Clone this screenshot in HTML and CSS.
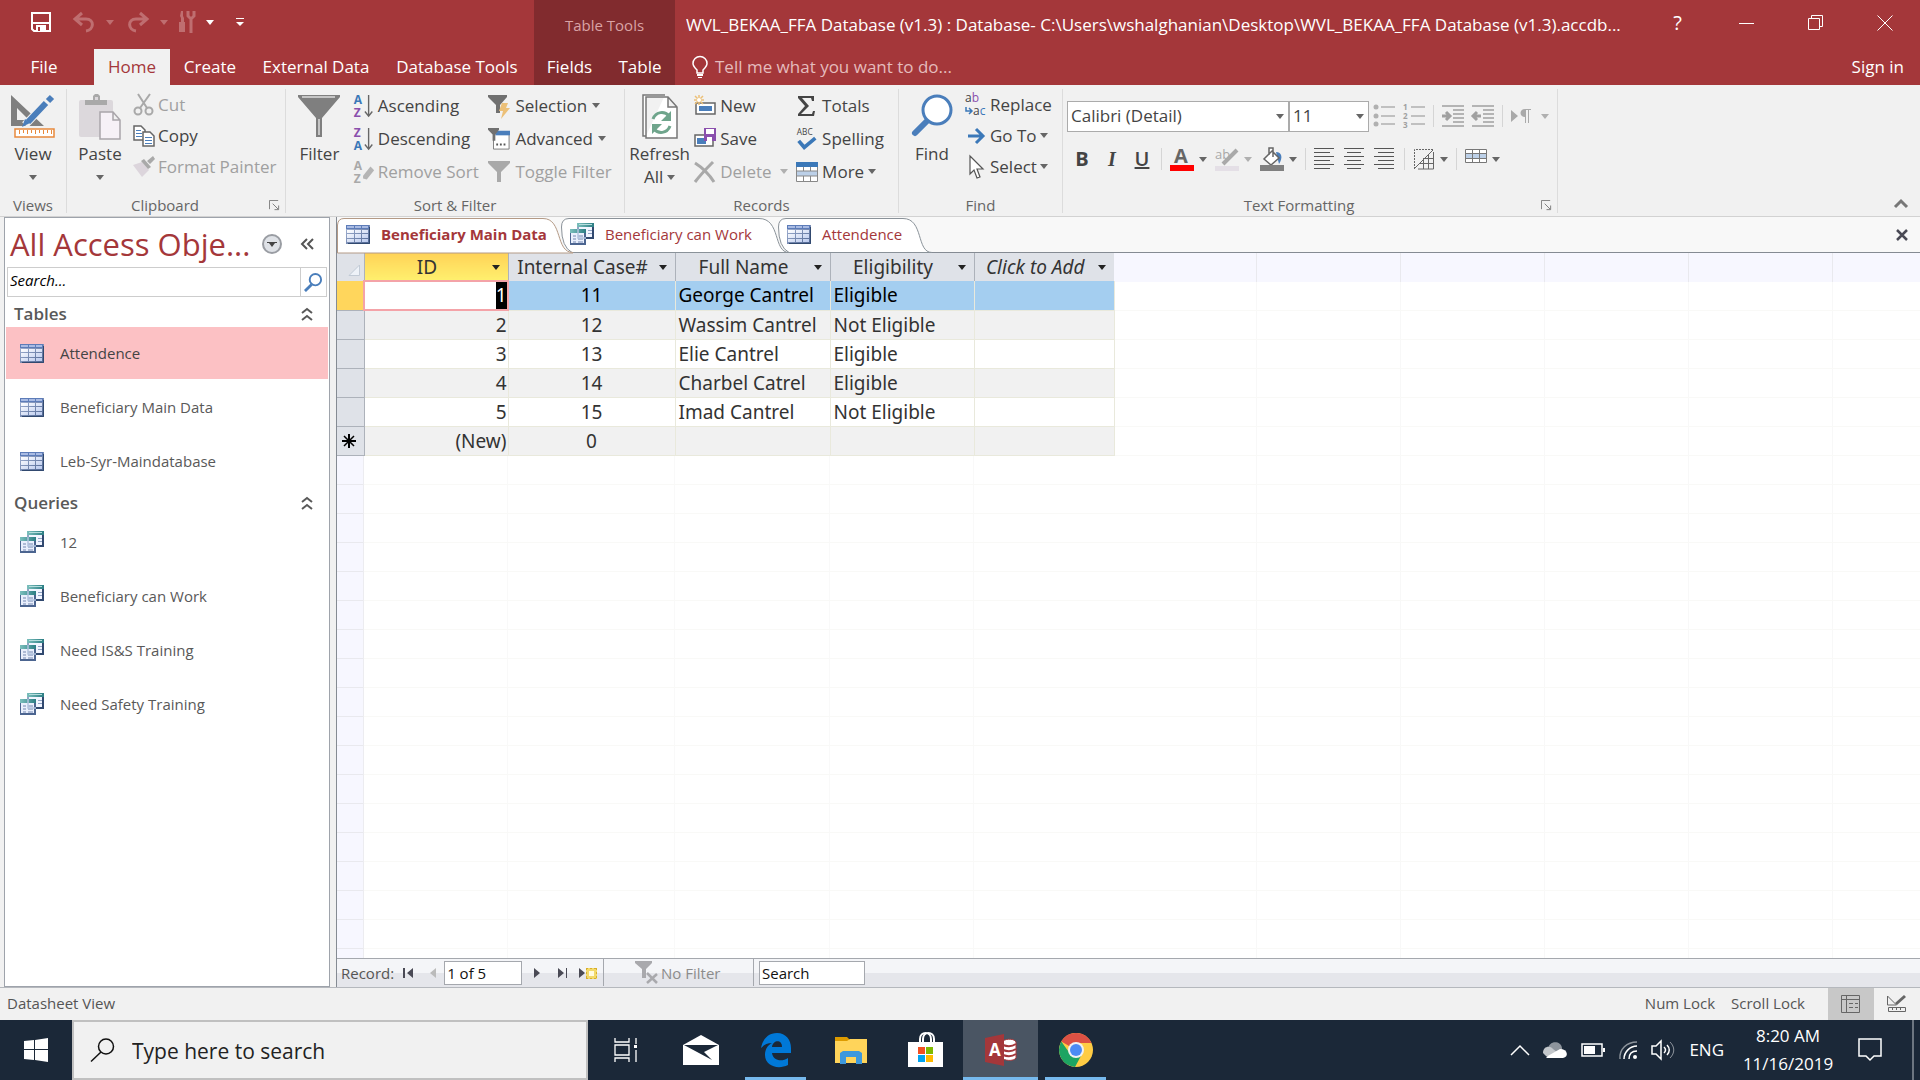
FILE: index.html
```html
<!DOCTYPE html>
<html lang="en">
<head>
<meta charset="utf-8">
<title>WVL_BEKAA_FFA Database (v1.3)</title>
<link rel="stylesheet" href="styles.css">
</head>
<body>
<svg class="defs" aria-hidden="true">
  <defs>
    <linearGradient id="cellShade" x1="0" y1="0" x2="1" y2="1"><stop offset="0" stop-color="#fff"/><stop offset="1" stop-color="#b9c9ee"/></linearGradient>
    <linearGradient id="frameShade" x1="0" y1="0" x2="1" y2="1"><stop offset="0" stop-color="#a9b8d8"/><stop offset="1" stop-color="#4c6390"/></linearGradient>
    <linearGradient id="tealShade" x1="0" y1="0" x2="1" y2="0"><stop offset="0" stop-color="#7cc0bd"/><stop offset="1" stop-color="#2b7d83"/></linearGradient>
    <symbol id="table" viewBox="0 0 24 19">
      <path fill="url(#frameShade)" d="M0 0h24v19H0z"/><path fill="#5d7cb8" d="M0 0h23v4H0z"/>
      <path fill="#a9bbe3" d="M1 1h7v2H1zM9 1h6v2H9zM16 1h6v2h-6z"/>
      <path fill="url(#cellShade)" d="M1 5h7v3H1zM9 5h6v3H9zM16 5h6v3h-6zM1 9h7v4H1zM9 9h6v4H9zM16 9h6v4h-6zM1 14h7v3H1zM9 14h6v3H9zM16 14h6v3h-6z"/>
      <path fill="none" stroke="#31496f" d="M23.500 2v16.500H2"/>
    </symbol>
    <symbol id="query" viewBox="0 0 24 22">
      <path fill="#31496f" d="M7 0h17v16H7z"/><path fill="#f1f5ff" d="M9 4h13v10H9z"/><path fill="url(#tealShade)" d="M7 0h17v4H7z"/><path fill="#b5dedd" d="M9 1h13v1H9z"/>
      <path stroke="#8fa3c4" d="M18 7.500h4M18 10.500h4"/>
      <path fill="#4c6590" d="M0 6h16v16H0z"/><path fill="#e9effc" d="M1 10h13v10H1z"/><path fill="url(#tealShade)" d="M0 6h16v4H0z"/>
      <path stroke="#9aabc9" stroke-width="1.500" d="M3 13h3M8 13h5M3 16h3M8 16h5M3 19h3M8 19h5"/><path fill="none" stroke="#b1c3de" stroke-width="1.500" d="M8 4v11h8"/>
    </symbol>
    <symbol id="lens" viewBox="0 0 20 20"><circle cx="12" cy="7" r="6" fill="none" stroke="currentColor" stroke-width="2"/><path stroke="currentColor" stroke-width="3" d="M8 12l-7 7"/></symbol>
    <symbol id="fold" viewBox="0 0 12 14"><path fill="none" stroke="currentColor" stroke-width="2" d="M1 6l5-4 5 4M1 13l5-4 5 4"/></symbol>
    <symbol id="launch" viewBox="0 0 12 12"><path fill="none" stroke="#777" d="M.5 10V.5H10M4 4l6 6M10.500 6v4.500H6"/></symbol>
    <symbol id="down" viewBox="0 0 8 5"><path fill="currentColor" d="M0 0h8L4 5z"/></symbol>
  </defs>
</svg>

<header class="titlebar">
  <div class="title-left">
    <div class="quick">
      <button aria-label="Save"><svg width="20" height="20" viewBox="0 0 20 20"><path fill="none" stroke="#fff" stroke-width="2" d="M1 1h18v18H3l-2-2z"/><path fill="#fff" d="M2 10h16v2H2z"/><path fill="#fff" d="M5 13h10v6H5z"/><path fill="#a4373a" d="M7 15h2v4H7z"/></svg></button>
      <button class="off undo" aria-label="Undo"><svg width="22" height="20" viewBox="0 0 22 20"><path fill="none" stroke="currentColor" stroke-width="3" d="M9 1L2 7l7 6M2 7h11c9 0 8 11 0 12"/></svg><svg class="dn"><use href="#down"/></svg></button>
      <button class="off redo" aria-label="Redo"><svg width="22" height="20" viewBox="0 0 22 20"><path fill="none" stroke="currentColor" stroke-width="3" d="M13 1l7 6-7 6M20 7H9C0 7 1 18 9 19"/></svg><svg class="dn"><use href="#down"/></svg></button>
      <button class="tools off" aria-label="Tools"><svg width="16" height="22" viewBox="0 0 16 22"><path fill="currentColor" d="M2 0h2v5l1 2v4H6v10H0V11h2V7L1 5z"/><path fill="none" stroke="currentColor" stroke-width="3" d="M9 0v5l3 3 3-3V0M12 8v14"/></svg></button>
      <button aria-label="Tool options"><svg class="dn"><use href="#down"/></svg></button>
      <button class="customize" aria-label="Customize Quick Access Toolbar"><svg width="8" height="9" viewBox="0 0 8 9"><path fill="#fff" d="M0 0h8v1H0zM0 4h8L4 8z"/></svg></button>
    </div>
    <nav class="tabs">
      <a class="tab file" href="#">File</a><a class="tab home" href="#">Home</a><a class="tab create" href="#">Create</a><a class="tab external" href="#">External Data</a><a class="tab dbtools" href="#">Database Tools</a>
    </nav>
  </div>
  <div class="context">
    <div class="context-name">Table Tools</div>
    <nav class="tabs"><a class="tab fields" href="#">Fields</a><a class="tab tbl" href="#">Table</a></nav>
  </div>
  <div class="title-right">
    <div class="caption">
      <h1>WVL_BEKAA_FFA Database (v1.3) : Database- C:\Users\wshalghanian\Desktop\WVL_BEKAA_FFA Database (v1.3).accdb...</h1>
      <div class="winbtns">
        <button aria-label="Help" class="help">?</button>
        <button aria-label="Minimize"><svg width="16" height="16"><path stroke="#fff" d="M0 8.500h15"/></svg></button>
        <button aria-label="Restore"><svg width="16" height="16"><path fill="none" stroke="#fff" d="M.5 3.500h11v11H.5zM3.500 3.500v-3h11v11h-3"/></svg></button>
        <button aria-label="Close"><svg width="16" height="16"><path stroke="#fff" d="M.5.5l15 15M15.500.5l-15 15"/></svg></button>
      </div>
    </div>
    <div class="tellrow">
      <button class="tell"><svg width="16" height="23" viewBox="0 0 16 23"><path fill="none" stroke="#fff" stroke-width="1.500" d="M5 17v-3C3 12 1 10 1 7.500a7 7 0 0 1 14 0c0 2.500-2 4.500-4 6.500v3z"/><path fill="#fff" d="M5 18h6v2H5zM6 21h4v1H6z"/></svg>Tell me what you want to do...</button>
      <a class="signin" href="#">Sign in</a>
    </div>
  </div>
</header>

<section class="ribbon">
  <div class="group views">
    <div class="tools-area"><button class="big"><svg width="44" height="47" viewBox="0 0 44 47"><path fill="#7f7f7f" fill-rule="evenodd" d="M0 1l33 31H0zM6 14v12h12z"/><path stroke="#f1f1f1" stroke-width="8" d="M14 31L39 5"/><path stroke="#4a7ebb" stroke-width="6" d="M17 28l18-19M37 7l4-4"/><path fill="#4a7ebb" d="M14 25l5 4-8 4z"/><path fill="#fff" stroke="#e8893c" stroke-width="1.500" d="M4 35h39v8H4z"/><path stroke="#e8893c" d="M8.500 36v4M12.500 36v3M16.500 36v4M20.500 36v3M24.500 36v4M28.500 36v3M32.500 36v4M36.500 36v3M40.500 36v4"/></svg><span>View</span><svg class="dn"><use href="#down"/></svg></button></div>
    <div class="label">Views</div>
  </div>
  <div class="group clipboard">
    <div class="tools-area">
      <button class="big"><svg width="42" height="47" viewBox="0 0 42 47"><rect y="6" width="34" height="37" rx="2" fill="#dcd8dc"/><path fill="#a9a9a9" d="M6 11V6h8V2l2-2h3l2 2v4h7v5z"/><path fill="#dcd8dc" d="M16 3h3v3h-3z"/><path fill="#f6f1f7" stroke="#a9a5aa" stroke-width="1.500" d="M21 18h13l7 8v19H21zM34 18v8h7"/></svg><span>Paste</span><svg class="dn"><use href="#down"/></svg></button>
      <div class="col tight">
        <button class="small off"><svg viewBox="0 0 22 22"><path fill="none" stroke="#a9a9a9" stroke-width="2" d="M5 0l9 14M17 0L7 14"/><circle cx="5" cy="17" r="3.500" fill="none" stroke="#a9a9a9" stroke-width="2"/><circle cx="16" cy="17" r="3.500" fill="none" stroke="#a9a9a9" stroke-width="2"/></svg>Cut</button>
        <button class="small"><svg viewBox="0 0 22 22"><path fill="#fff" stroke="#666" stroke-width="1.500" d="M1 1h7l4 4v10H1z"/><path stroke="#4a7ebb" d="M3 5.500h5M3 8.500h6M3 11.500h6"/><path fill="#fff" stroke="#666" stroke-width="1.500" d="M10 7h7l4 4v10H10z"/><path stroke="#4a7ebb" d="M12 12.500h7M12 15.500h7M12 18.500h7"/></svg>Copy</button>
        <button class="small off"><svg viewBox="0 0 22 22"><path fill="#dcd5dc" d="M0 9l9-3 7 8-7 7z"/><path fill="#a9a9a9" d="M8 5l3-2 7 8-3 2zM14 5l6-5 2 3-5 5z"/></svg>Format Painter</button>
      </div>
    </div>
    <div class="label with-launcher">Clipboard<button class="launcher" aria-label="Clipboard settings"><svg width="11" height="11"><use href="#launch"/></svg></button></div>
  </div>
  <div class="group sort">
    <div class="tools-area">
      <button class="big"><svg width="42" height="47" viewBox="0 0 42 47" fill="#7f7f7f"><path d="M0 1h42v2L24 24v19h-6V24L0 3z"/><path stroke="#ddd" fill="none" stroke-width="1.500" d="M4 3h33M21 25v16"/></svg><span>Filter</span></button>
      <div class="col">
        <button class="small"><svg viewBox="0 0 22 26"><text x="0" y="11" fill="#3b78b8" class="az">A</text><text x="0" y="25" fill="#8a4fad" class="az">Z</text><path fill="none" stroke="#666" stroke-width="1.500" d="M16 1v22M12 19l4 5 4-5"/></svg>Ascending</button>
        <button class="small"><svg viewBox="0 0 22 26"><text x="0" y="11" fill="#8a4fad" class="az">Z</text><text x="0" y="25" fill="#3b78b8" class="az">A</text><path fill="none" stroke="#666" stroke-width="1.500" d="M16 1v22M12 19l4 5 4-5"/></svg>Descending</button>
        <button class="small off"><svg viewBox="0 0 22 26"><text x="0" y="11" fill="#a9a9a9" class="az">A</text><text x="0" y="25" fill="#a9a9a9" class="az">Z</text><path fill="#b5b5b5" d="M10 17l8-10 4 4-8 10-4-1z"/></svg>Remove Sort</button>
      </div>
      <div class="col second">
        <button class="small"><svg viewBox="0 0 22 24"><path fill="#707070" d="M0 1h19v2l-7 8v8H8v-8L0 3z"/><path fill="#ecc078" d="M14 9h6l-2 5h4l-9 11 2-8h-4z"/></svg>Selection<svg class="dn"><use href="#down"/></svg></button>
        <button class="small"><svg viewBox="0 0 24 26"><path fill="#fff" stroke="#777" d="M6 6h17v18H6z"/><path fill="#4a7ebb" d="M8 4h16v5H8z"/><path fill="#707070" d="M0 1h12v2L8 8v7H5V8L0 3z"/><path fill="#555" d="M9 18h2v2H9zM13 18h2v2h-2zM17 18h2v2h-2z"/></svg>Advanced<svg class="dn"><use href="#down"/></svg></button>
        <button class="small off"><svg viewBox="0 0 22 24" fill="#a9a9a9"><path d="M0 1h22v2l-9 9v10H9V12L0 3z"/></svg>Toggle Filter</button>
      </div>
    </div>
    <div class="label">Sort &amp; Filter</div>
  </div>
  <div class="group records">
    <div class="tools-area">
      <button class="big"><svg width="36" height="47" viewBox="0 0 36 47"><path fill="#fff" stroke="#777" stroke-width="1.500" d="M23 1H1v41h3M4 3h22l9 10v31H4zM26 3v10h9"/><path fill="none" stroke="#6fa58c" stroke-width="3" d="M11 25c3-8 12-8 16-3M28 32c-3 8-12 8-16 3"/><path fill="#6fa58c" d="M29 17v10H19zM10 40V30h10z"/></svg><span>Refresh</span><span class="line2">All<svg class="dn"><use href="#down"/></svg></span></button>
      <div class="col">
        <button class="small"><svg viewBox="0 0 22 22"><path fill="#fff" stroke="#666" stroke-width="1.500" d="M2 8h19v11H2z"/><path fill="#4a7ebb" d="M5 11h13v5H5z"/><path stroke="#ecc078" stroke-width="1.500" d="M5 0v10M0 5h10M1 1l8 8M9 1L1 9"/><circle cx="5" cy="5" r="2" fill="#fff"/></svg>New</button>
        <button class="small"><svg viewBox="0 0 22 22"><path fill="#fff" stroke="#666" stroke-width="1.500" d="M1 7h18v11H1z"/><path fill="#4a7ebb" d="M3 10h9v6H3z"/><path fill="#8a4fad" d="M10 0h12v13H10z"/><path fill="#fff" d="M12 1h8v5h-8zM13 9h5v4h-5z"/></svg>Save</button>
        <button class="small off del"><svg viewBox="0 0 22 22"><path fill="none" stroke="#a9a9a9" stroke-width="3" d="M1 2c8 5 14 11 19 19M19 1C12 8 7 13 1 21"/></svg>Delete<svg class="dn"><use href="#down"/></svg></button>
      </div>
      <div class="col">
        <button class="small"><svg viewBox="0 0 22 22"><path fill="#444" d="M2 1h16v5h-2l-1-3H6l7 8-8 8h11l1-3h2l-1 5H2v-2l7-8-7-8z"/></svg>Totals</button>
        <button class="small"><svg viewBox="0 0 22 26"><text x="0" y="9" fill="#444" class="abc">ABC</text><path fill="none" stroke="#3b78b8" stroke-width="4" d="M2 15l6 7L20 12"/></svg>Spelling</button>
        <button class="small"><svg viewBox="0 0 22 20"><path fill="#fff" stroke="#888" d="M.5.500h21v19H.5z"/><path fill="#3b78b8" d="M0 0h22v5H0z"/><path fill="#bcd0e8" d="M1 9h20v5H1z"/><path fill="none" stroke="#888" d="M7.500 5v4M14.500 5v4M7.500 14v5M14.500 14v5M0 9h22M0 14h22"/></svg>More<svg class="dn"><use href="#down"/></svg></button>
      </div>
    </div>
    <div class="label">Records</div>
  </div>
  <div class="group find">
    <div class="tools-area">
      <button class="big"><svg width="42" height="47" viewBox="0 0 42 47"><path stroke="#4a7ebb" stroke-width="6" stroke-linecap="round" d="M15 28L4 39"/><circle cx="26" cy="16" r="14" fill="#fff" stroke="#4a7ebb" stroke-width="3"/></svg><span>Find</span></button>
      <div class="col tight">
        <button class="small"><svg viewBox="0 0 22 24"><text x="0" y="9" class="ab" fill="#444">a<tspan fill="#8a4fad">b</tspan></text><text x="8" y="22" class="ab" fill="#444">a<tspan fill="#3b78b8">c</tspan></text><path fill="none" stroke="#3b78b8" stroke-width="1.500" d="M1 14v4h5M4 15l3 3-3 3"/></svg>Replace</button>
        <button class="small"><svg viewBox="0 0 22 22"><path fill="none" stroke="#3b78b8" stroke-width="3" d="M3 11h14M11 4l7 7-7 7"/></svg>Go To<svg class="dn"><use href="#down"/></svg></button>
        <button class="small"><svg viewBox="0 0 22 22"><path fill="#fff" stroke="#555" stroke-width="1.200" d="M5 0v18l4-4 3 8 3-1-3-8h6z"/></svg>Select<svg class="dn"><use href="#down"/></svg></button>
      </div>
    </div>
    <div class="label">Find</div>
  </div>
  <div class="group format">
    <div class="tools-area stack">
      <div class="frow">
        <label class="combo font"><input value="Calibri (Detail)" aria-label="Font"><svg class="dn"><use href="#down"/></svg></label><label class="combo size"><input value="11" aria-label="Font size"><svg class="dn"><use href="#down"/></svg></label>
        <button class="ic first" aria-label="Bullets"><svg width="22" height="24" viewBox="0 0 22 24"><path stroke="#b0b0b0" stroke-width="1.500" d="M8 3h14M8 12h14M8 20h14"/><g fill="#b0b0b0"><circle cx="3" cy="3" r="2.500"/><circle cx="3" cy="12" r="2.500"/><circle cx="3" cy="20" r="2.500"/></g></svg></button>
        <button class="ic" aria-label="Numbering"><svg width="22" height="24" viewBox="0 0 22 24"><path stroke="#b0b0b0" stroke-width="1.500" d="M8 3h14M8 12h14M8 20h14"/><g class="num" fill="#a0a0a0"><text x="0" y="6">1</text><text x="0" y="15">2</text><text x="0" y="24">3</text></g></svg></button>
        <i class="sep"></i>
        <button class="ic" aria-label="Increase indent"><svg width="22" height="22" viewBox="0 0 22 22"><path stroke="#a0a0a0" stroke-width="1.500" d="M0 1h22M11 5h11M11 9h11M11 13h11M11 17h11M0 21h22"/><path fill="none" stroke="#a0a0a0" stroke-width="3" d="M0 11h7M4 7l4 4-4 4"/></svg></button>
        <button class="ic" aria-label="Decrease indent"><svg width="22" height="22" viewBox="0 0 22 22"><path stroke="#a0a0a0" stroke-width="1.500" d="M0 1h22M11 5h11M11 9h11M11 13h11M11 17h11M0 21h22"/><path fill="none" stroke="#a0a0a0" stroke-width="3" d="M9 11H2M5 7l-4 4 4 4"/></svg></button>
        <i class="sep"></i>
        <button class="ic off" aria-label="Text direction"><svg width="20" height="14" viewBox="0 0 20 14"><path fill="#a9a9a9" d="M0 1l7 6-7 6zM13 0h7v1h-2v13h-1V1h-2v13h-1V8c-6 0-6-8 0-8z"/></svg><svg class="dn"><use href="#down"/></svg></button>
      </div>
      <div class="frow second-row">
        <button class="letter b" aria-label="Bold">B</button><button class="letter i" aria-label="Italic">I</button><button class="letter u" aria-label="Underline">U</button>
        <i class="sep"></i>
        <button class="ic" aria-label="Font colour"><svg width="24" height="24" viewBox="0 0 24 24"><text x="4" y="16" class="fc" fill="#666">A</text><path fill="red" d="M0 18h24v6H0z"/></svg><svg class="dn"><use href="#down"/></svg></button>
        <button class="ic off" aria-label="Highlight"><svg width="24" height="24" viewBox="0 0 24 24"><text x="0" y="12" class="hl" fill="#a9a9a9">ab</text><path stroke="#a9a9a9" stroke-width="4" d="M22 3L8 17"/><path fill="#e4dfe6" d="M0 19h24v5H0z"/></svg><svg class="dn"><use href="#down"/></svg></button>
        <button class="ic" aria-label="Background colour"><svg width="24" height="24" viewBox="0 0 24 24"><path fill="#4a7ebb" d="M16 5c6 0 7 6 3 12z"/><path fill="#fff" stroke="#666" stroke-width="1.500" d="M12 4l7 7-8 7-7-6zM9 8V1h4v9"/><path fill="#808080" d="M0 18h24v6H0z"/></svg><svg class="dn"><use href="#down"/></svg></button>
        <i class="sep"></i>
        <button class="ic al" aria-label="Align left"><svg width="20" height="22"><path stroke="#555" d="M0 .5h20M0 4.500h16M0 8.500h20M0 12.500h16M0 16.500h20M0 20.500h16"/></svg></button>
        <button class="ic al" aria-label="Centre"><svg width="20" height="22"><path stroke="#555" d="M0 .5h20M3 4.500h14M0 8.500h20M3 12.500h14M0 16.500h20M3 20.500h14"/></svg></button>
        <button class="ic al" aria-label="Align right"><svg width="20" height="22"><path stroke="#555" d="M0 .5h20M4 4.500h16M0 8.500h20M4 12.500h16M0 16.500h20M4 20.500h16"/></svg></button>
        <i class="sep"></i>
        <button class="ic" aria-label="Gridlines"><svg width="22" height="22" viewBox="0 0 22 22"><path fill="none" stroke="#666" stroke-dasharray="2 1" d="M1.500 21V1.500H20"/><path fill="none" stroke="#666" d="M1 21L20 2M20.500 4v17H5M10.500 12v9M15.500 7v14M10 10.500h10M7 15.500h14"/></svg><svg class="dn"><use href="#down"/></svg></button>
        <i class="sep"></i>
        <button class="ic" aria-label="Alternate row colour"><svg width="22" height="22" viewBox="0 0 22 22"><path fill="#fff" d="M0 1h22v14H0z"/><path fill="#bcd0e8" d="M1 6h20v4H1z"/><path fill="none" stroke="#777" d="M.5 1.500h21v13H.5zM7.500 1v14M14.500 1v14M0 5.500h22M0 10.500h22"/></svg><svg class="dn"><use href="#down"/></svg></button>
      </div>
    </div>
    <div class="label with-launcher">Text Formatting<button class="launcher" aria-label="Text formatting settings"><svg width="11" height="11"><use href="#launch"/></svg></button></div>
  </div>
  <button class="collapse" aria-label="Collapse ribbon"><svg width="14" height="10"><path fill="none" stroke="#777" stroke-width="3" d="M1 9l6-6 6 6"/></svg></button>
</section>

<main class="work">
  <aside class="nav">
    <div class="nav-head"><h2>All Access Obje...</h2>
      <button aria-label="Navigation options"><svg width="20" height="20"><circle cx="10" cy="10" r="9" fill="#dfe2e7" stroke="#9a9da3" stroke-width="2"/><path fill="#444" d="M5 8h10v1h-2l-3 4-3-4H5z"/></svg></button>
      <button aria-label="Collapse pane"><svg width="13" height="12"><path fill="none" stroke="#555" stroke-width="2" d="M6 1L1 6l5 5M12 1L7 6l5 5"/></svg></button>
    </div>
    <div class="nav-search"><input placeholder="Search..." aria-label="Search objects"><button aria-label="Search"><svg width="19" height="19"><use href="#lens"/></svg></button></div>
    <section class="nav-group"><h3>Tables<svg width="12" height="14"><use href="#fold"/></svg></h3>
      <a class="obj sel" href="#"><svg width="24" height="19"><use href="#table"/></svg>Attendence</a>
      <a class="obj" href="#"><svg width="24" height="19"><use href="#table"/></svg>Beneficiary Main Data</a>
      <a class="obj" href="#"><svg width="24" height="19"><use href="#table"/></svg>Leb-Syr-Maindatabase</a>
    </section>
    <section class="nav-group"><h3>Queries<svg width="12" height="14"><use href="#fold"/></svg></h3>
      <a class="obj" href="#"><svg width="24" height="22"><use href="#query"/></svg>12</a>
      <a class="obj" href="#"><svg width="24" height="22"><use href="#query"/></svg>Beneficiary can Work</a>
      <a class="obj" href="#"><svg width="24" height="22"><use href="#query"/></svg>Need IS&amp;S Training</a>
      <a class="obj" href="#"><svg width="24" height="22"><use href="#query"/></svg>Need Safety Training</a>
    </section>
  </aside>

  <section class="doc">
    <div class="doc-tabs">
      <button class="dtab one"><svg class="shape" width="236" height="36"><path fill="#fff" stroke="#b49a86" d="M.5 36V8Q1 1.500 7 1.500H206C226 1.500 218 35.500 236 35.500V36z"/></svg><svg width="24" height="19"><use href="#table"/></svg><span>Beneficiary Main Data</span></button>
      <button class="dtab two"><svg class="shape" width="228" height="36"><path fill="#fff" stroke="#8a9299" d="M11 35.500Q.5 30 .5 10 .5 1.500 8 1.500H198C220 1.500 212 35.500 228 35.500z"/></svg><svg width="24" height="22"><use href="#query"/></svg><span>Beneficiary can Work</span></button>
      <button class="dtab three"><svg class="shape" width="154" height="36"><path fill="#fff" stroke="#8a9299" d="M11 35.500Q.5 30 .5 10 .5 1.500 8 1.500H125C146 1.500 138 35.500 154 35.500z"/></svg><svg width="24" height="19"><use href="#table"/></svg><span>Attendence</span></button>
      <button class="doc-close" aria-label="Close tab"><svg width="12" height="10"><path stroke="#4a4a55" stroke-width="2.500" d="M1 0l10 10M11 0L1 10"/></svg></button>
    </div>
    <div class="sheet">
      <table>
        <colgroup><col class="c-sel"><col class="c-id"><col class="c-case"><col class="c-name"><col class="c-elig"><col class="c-add"></colgroup>
        <thead><tr><th class="corner"><svg width="12" height="12"><path fill="#eef2f8" stroke="#c2cbd6" d="M11.500 1v10.500H1z"/></svg></th>
          <th class="active"><div><span>ID</span><button aria-label="ID options"><svg class="dn"><use href="#down"/></svg></button></div></th>
          <th><div><span>Internal Case#</span><button aria-label="Internal Case# options"><svg class="dn"><use href="#down"/></svg></button></div></th>
          <th><div><span>Full Name</span><button aria-label="Full Name options"><svg class="dn"><use href="#down"/></svg></button></div></th>
          <th><div><span>Eligibility</span><button aria-label="Eligibility options"><svg class="dn"><use href="#down"/></svg></button></div></th>
          <th class="add"><div><span>Click to Add</span><button aria-label="Add options"><svg class="dn"><use href="#down"/></svg></button></div></th></tr></thead>
        <tbody>
          <tr class="current"><th></th><td class="id"><mark>1</mark></td><td class="case">11</td><td>George Cantrel</td><td>Eligible</td><td></td></tr>
          <tr><th></th><td class="id">2</td><td class="case">12</td><td>Wassim Cantrel</td><td>Not Eligible</td><td></td></tr>
          <tr><th></th><td class="id">3</td><td class="case">13</td><td>Elie Cantrel</td><td>Eligible</td><td></td></tr>
          <tr><th></th><td class="id">4</td><td class="case">14</td><td>Charbel Catrel</td><td>Eligible</td><td></td></tr>
          <tr><th></th><td class="id">5</td><td class="case">15</td><td>Imad Cantrel</td><td>Not Eligible</td><td></td></tr>
          <tr><th><svg width="14" height="14"><path stroke="#000" stroke-width="2" d="M7 0v14M0 7h14"/><path stroke="#000" stroke-width="1.500" d="M2 2l10 10M12 2L2 12"/></svg></th><td class="id">(New)</td><td class="case">0</td><td></td><td></td><td></td></tr>
        </tbody>
      </table>
    </div>
    <div class="recbar">
      <div class="part nav-part"><span>Record:</span>
        <button class="firstrec" aria-label="First record"><svg width="10" height="10"><path fill="#4a4a55" d="M0 0h2v10H0zM10 0v10L4 5z"/></svg></button>
        <button class="prev" aria-label="Previous record"><svg width="6" height="10"><path fill="#bbb" d="M6 0v10L0 5z"/></svg></button>
        <input class="recno" value="1 of 5" aria-label="Current record">
        <button class="next" aria-label="Next record"><svg width="6" height="10"><path fill="#4a4a55" d="M0 0l6 5-6 5z"/></svg></button>
        <button class="last" aria-label="Last record"><svg width="10" height="10"><path fill="#4a4a55" d="M0 0l6 5-6 5zM8 0h1v10H8z"/></svg></button>
        <button class="newrec" aria-label="New record"><svg width="18" height="12"><path fill="#4a4a55" d="M0 1l6 5-6 5z"/><path fill="#f3da6b" d="M7 1h11v11H7z"/><path stroke="#d8ae2c" stroke-dasharray="2 2" d="M7 1.500h11M7 11.500h11M7.500 1v11M17.500 1v11"/><path fill="#fffbe0" d="M10 4h5v5h-5z"/></svg></button>
      </div>
      <div class="part filter-part"><svg width="23" height="24"><path fill="#a9a9ad" d="M0 0h17v2l-6 6v9H7V8L0 2z"/><path stroke="#a9a9ad" stroke-width="2.500" d="M12 12l10 10M22 13l-10 9"/></svg>No Filter</div>
      <div class="part search-part"><input value="Search" aria-label="Search records"></div>
    </div>
  </section>
</main>

<footer class="status"><span class="mode">Datasheet View</span><span>Num Lock</span><span class="scroll">Scroll Lock</span>
  <button class="view on" aria-label="Datasheet View"><svg width="20" height="18"><path fill="none" stroke="#666" d="M.5.5h18v17H.5zM5.500 1v17M1 4.500h17M8 8.500h4M14 8.500h3M8 12.500h4M14 12.500h3"/></svg></button>
  <button class="view" aria-label="Design View"><svg width="20" height="18"><path fill="none" stroke="#666" d="M.5 1v9h9zM1.500 12.500h17v4h-17zM5.500 13v2M9.500 13v2M13.500 13v2"/><path stroke="#666" stroke-width="3" d="M9 9l9-8"/></svg></button>
</footer>

<div class="taskbar">
  <button class="start" aria-label="Start"><svg width="24" height="24"><path fill="#fff" d="M0 3l10-1v9H0zM11 2l13-2v11H11zM0 12h10v10L0 21zM11 12h13v12l-13-2z"/></svg></button>
  <label class="tsearch"><svg width="24" height="24"><circle cx="16" cy="8.500" r="7.500" fill="none" stroke="#111" stroke-width="1.500"/><path stroke="#111" stroke-width="1.500" d="M11 14L1 23.500"/></svg><input placeholder="Type here to search" aria-label="Type here to search"></label>
  <button class="app" aria-label="Task View"><svg width="24" height="24"><path fill="none" stroke="#fff" stroke-width="1.300" d="M1 0v4h14V0M1 24v-4h14v4M1 7h14v10H1zM22 0v6M22 12v12"/><path fill="#fff" d="M20 7h3v3h-3z"/></svg></button>
  <button class="app" aria-label="Mail"><svg width="36" height="30"><path fill="#fff" d="M0 10L18 0l18 10v20H0z"/><path fill="#1b2838" d="M1 10h34l-14 7 8 8z"/></svg></button>
  <button class="app run" aria-label="Edge"><svg width="30" height="34" viewBox="0 0 30 34"><path fill="#0078d7" d="M0 15C2 5 8 0 16 0c9 0 14 7 14 15v5H11c1 8 10 9 16 5v7c-10 5-23 1-23-10 0-6 3-10 7-12-5 0-8 2-11 5zm11-1h10c0-8-9-7-10 0z"/></svg></button>
  <button class="app" aria-label="File Explorer"><svg width="32" height="28"><path fill="#dd9b00" d="M0 1h12l3 3v5H0z"/><path fill="#ffd45a" d="M0 5h12l3-2h17v24H0z"/><path fill="#3d98dc" d="M5 28V17l3-2h16l3 2v11h-6v-7H11v7z"/></svg></button>
  <button class="app" aria-label="Store"><svg width="36" height="36"><path fill="none" stroke="#fff" stroke-width="2" d="M12 11V7c0-8 11-8 11 0v4M15 11V7c0-8 11-8 11 0v4"/><path fill="#fff" d="M0 10h35v25H0z"/><path fill="#f25022" d="M10 15h7v7h-7z"/><path fill="#7fba00" d="M18 15h7v7h-7z"/><path fill="#00a4ef" d="M10 23h7v7h-7z"/><path fill="#ffb900" d="M18 23h7v7h-7z"/></svg></button>
  <button class="app run active-app" aria-label="Access"><svg width="32" height="32"><path fill="#fff" stroke="#a4373a" d="M18 7c4-3 12-2 13 1v16c-2 3-9 3-13 1z"/><path fill="none" stroke="#a4373a" stroke-width="2" d="M18 11c5 2 10 1 13-1M18 16c5 2 10 1 13-1M18 21c5 2 10 1 13-1"/><path fill="#a4373a" d="M0 4l19-4v32L0 28z"/><text x="4" y="22" class="acc" fill="#fff">A</text></svg></button>
  <button class="app run" aria-label="Chrome"><svg width="34" height="34" viewBox="0 0 34 34"><circle cx="17" cy="17" r="17" fill="#fc4"/><path fill="#dd5144" d="M17 17L2.300 8.500A17 17 0 0 1 32.500 10H17z"/><path fill="#1da462" d="M2.300 8.500A17 17 0 0 0 16 34l7-13-11 1z"/><circle cx="17" cy="17" r="8" fill="#f1f1f1"/><circle cx="17" cy="17" r="6" fill="#4c8bf5"/></svg></button>
  <div class="tray">
    <svg width="18" height="10"><path fill="none" stroke="#fff" stroke-width="1.500" d="M0 10l9-9 9 9"/></svg>
    <svg width="24" height="16"><path fill="#8d949c" d="M5 8c0-10 13-10 14-2v6z"/><path fill="#c3c7cb" d="M0 11c0-7 7-8 10-4l9 7H3z"/><path fill="#fff" d="M3 15l14-8c8 0 9 8 3 9H4z"/></svg>
    <svg width="24" height="14"><path fill="none" stroke="#fff" stroke-width="1.500" d="M1 1h20v12H1z"/><path fill="#fff" d="M3 3h11v8H3zM22 5h2v4h-2z"/></svg>
    <svg width="18" height="19"><g fill="none" stroke="#fff" stroke-width="1.500"><path opacity=".5" d="M1 18C0 8 8 1 18 1"/><path d="M5 18c0-7 6-13 13-13M10 18c0-5 3-8 8-8"/></g><circle cx="16" cy="16" r="2" fill="#fff"/></svg>
    <svg width="24" height="20"><path fill="none" stroke="#fff" stroke-width="1.500" d="M1 6h4l5-5v18l-5-5H1zM13 7c2 2 2 4 0 6M16 5c3 3 3 7 0 10"/><path opacity=".5" fill="none" stroke="#fff" d="M19 2c5 5 5 11 0 16"/></svg>
    <span class="lang">ENG</span>
    <time class="clock"><span>8:20 AM</span><span>11/16/2019</span></time>
    <svg class="note" width="24" height="24"><path fill="none" stroke="#fff" stroke-width="1.500" d="M1 1h22v17h-7l-4 4-4-4H1z"/></svg>
  </div>
</div>
</body>
</html>
```
FILE: styles.css
```css
* { box-sizing: border-box; }
body {
  margin: 0;
  height: 100vh;
  display: flex;
  flex-direction: column;
  overflow: hidden;
  background: #f1f1f1;
  color: #444;
  font: 17px/24px "Open Sans", "Noto Sans", sans-serif;
}
button, input { font: inherit; color: inherit; border: 0; background: none; padding: 0; margin: 0; }
a { color: inherit; text-decoration: none; }
h1, h2, h3 { margin: 0; font-weight: 400; }
svg { display: block; flex: none; overflow: visible; }
.defs { position: absolute; width: 0; height: 0; }
.dn { width: 8px; height: 5px; color: #666; }
.off { color: #a0a0a0; }
.off .dn { color: #b0b0b0; }

/* Title bar and ribbon tabs */
.titlebar { display: flex; flex: none; height: 85px; background: #a4373a; color: #fff; }
.titlebar .dn { color: #fff; }
.title-left { width: 534px; }
.quick { height: 49px; display: flex; align-items: center; padding: 0 0 5px 31px; }
.quick button { display: flex; align-items: center; gap: 11px; margin-right: 22px; }
.quick .off, .quick .off .dn { color: #bf6e70; }
.quick .undo { margin-right: 13px; }
.quick .redo { margin-right: 11px; }
.quick .tools { margin-right: 11px; }
.tabs { display: flex; height: 36px; line-height: 36px; }
.tab { text-align: center; white-space: nowrap; }
.file { width: 88px; margin-right: 6px; }
.home { width: 76px; background: #f1f1f1; color: #a4373a; }
.create { width: 80px; }
.external { width: 132px; }
.dbtools { width: 150px; }
.context { width: 141px; background: #812b2e; }
.context-name { height: 49px; line-height: 50px; text-align: center; font-size: 15px; color: #d9a3a5; }
.fields { width: 71px; }
.tbl { width: 70px; }
.title-right { flex: 1; min-width: 0; }
.caption { display: flex; height: 49px; padding-left: 11px; }
h1 { flex: 1; font-size: 17px; line-height: 50px; white-space: nowrap; overflow: hidden; }
.winbtns { display: flex; align-items: center; padding: 0 1px 4px 0; }
.winbtns button { width: 69px; height: 30px; display: grid; place-items: center; }
.help { font-size: 20px; }
.tellrow { display: flex; justify-content: space-between; padding: 0 16px 0 17px; line-height: 36px; }
.tell { display: flex; align-items: center; gap: 7px; color: #e5bcbd; }

/* Ribbon */
.ribbon { display: flex; flex: none; height: 132px; border-bottom: 1px solid #d2d2d2; }
.group { display: flex; flex-direction: column; position: relative; border-right: 1px solid #dcdcdc; margin: 4px 0 3px; }
.tools-area { display: flex; flex: none; height: 107px; }
.label { line-height: 18px; font-size: 15px; text-align: center; color: #666; }
.with-launcher { padding-right: 22px; }
.launcher { position: absolute; right: 5px; bottom: 2px; }
.views { width: 67px; }
.clipboard { width: 219px; }
.sort { width: 339px; }
.records { width: 274px; }
.find { width: 164px; }
.format { width: 495px; }
.big { display: flex; flex-direction: column; align-items: center; padding-top: 5px; line-height: 26px; }
.big > .dn { margin-top: 8px; }
.big > .line2 { display: flex; align-items: center; gap: 4px; line-height: 20px; }
.views .big { width: 66px; }
.clipboard .big { width: 66px; }
.sort .big { width: 68px; }
.records .big { width: 70px; }
.find .big { width: 66px; }
.col { display: flex; flex-direction: column; }
.small { height: 33px; display: flex; align-items: center; gap: 4px; white-space: nowrap; }
.small > svg:first-child { width: 22px; height: 24px; }
.tight .small { height: 31px; gap: 3px; }
.sort .small { gap: 3px; }
.sort .second .small { gap: 5px; }
.sort .col { width: 138px; }
.records .col { width: 103px; }
.del .dn { margin-left: 4px; }
.az { font: bold 13px "Open Sans", sans-serif; }
.abc { font: 9px "Open Sans", sans-serif; }
.ab { font: 12px "Open Sans", sans-serif; }
.num { font: bold 8px "Open Sans", sans-serif; }
.fc { font: bold 20px "Open Sans", sans-serif; }
.hl { font: 13px "Open Sans", sans-serif; }
.acc { font: bold 17px "Open Sans", sans-serif; }
.stack { flex-direction: column; padding: 12px 0 0 4px; }
.frow { display: flex; align-items: center; height: 30px; gap: 8px; }
.second-row { margin-top: 13px; padding-left: 4px; }
.combo { display: flex; align-items: center; height: 31px; border: 1px solid #ababab; background: #fff; padding: 0 4px 0 3px; }
.combo input { flex: 1; min-width: 0; }
.font { width: 222px; }
.size { width: 80px; margin-left: -8px; }
.first { margin-left: -4px; }
.ic { display: flex; align-items: center; gap: 10px; }
.second-row .ic { gap: 5px; }
.al { margin-right: 2px; }
.sep { width: 1px; height: 22px; background: #d5d5d5; }
.letter { width: 22px; font-size: 20px; text-align: center; }
.b { font-weight: 700; }
.i { font-family: "Liberation Serif", serif; font-style: italic; font-weight: 700; }
.u { text-decoration: underline; font-weight: 600; }
.collapse { margin: auto 12px 8px auto; }

/* Navigation pane */
.work { flex: 1; min-height: 0; display: flex; border-bottom: 1px solid #b5b8bd; }
.nav { width: 326px; margin: 0 6px 0 4px; border: 1px solid #9ea3ab; background: #fff; }
.nav-head { display: flex; align-items: center; height: 49px; padding: 2px 15px 0 5px; gap: 19px; }
h2 { flex: 1; font-size: 31px; line-height: 40px; color: #a4373a; white-space: nowrap; }
.nav-head h2 { min-width: 0; }
.nav-head button:first-of-type { margin-left: -14px; }
.nav-search { display: flex; height: 30px; margin: 0 2px; border: 1px solid #cdcdcd; }
.nav-search input { flex: 1; min-width: 0; padding: 0 2px 4px; font-size: 15px; font-style: italic; }
.nav-search input::placeholder { color: #000; opacity: 1; }
.nav-search button { width: 26px; border-left: 1px solid #cdcdcd; display: grid; place-items: center; color: #4a7ebb; }
.nav-group { padding: 0 1px; }
h3 { display: flex; align-items: center; justify-content: space-between; height: 30px; padding: 3px 15px 0 8px; font-size: 17px; font-weight: 600; color: #595959; }
.nav-group + .nav-group h3 { height: 27px; padding-top: 0; }
.obj { display: flex; align-items: center; gap: 16px; height: 54px; padding: 0 0 2px 14px; font-size: 15px; color: #595959; }
.sel { height: 52px; margin-bottom: 2px; padding-bottom: 0; background: #fcc1c4; color: #444; }

/* Document area */
.doc { flex: 1; min-width: 0; display: flex; flex-direction: column; border-left: 1px solid #858b93; background: #fff; }
.doc-tabs { display: flex; height: 36px; flex: none; background: #f8f8f8; border-bottom: 1px solid #858b93; }
.dtab { position: relative; display: flex; align-items: center; gap: 11px; padding: 0 0 1px 9px; font-size: 15px; color: #a4373a; white-space: nowrap; }
.dtab > * { position: relative; }
.dtab .shape { position: absolute; left: 0; top: 0; }
.one { width: 236px; z-index: 3; font-weight: 700; }
.two { width: 228px; z-index: 2; margin-left: -12px; }
.three { width: 154px; z-index: 1; margin-left: -11px; }
.doc-close { margin: 0 12px 0 auto; }
.sheet {
  flex: 1; min-height: 0; overflow: hidden;
  background:
    repeating-linear-gradient(transparent 0 28px, #e9e9ee 28px 29px) 0 0 / 26px 100% no-repeat,
    linear-gradient(#f7f7ff, #f7f7ff) 0 0 / 26px 100% no-repeat,
    repeating-linear-gradient(90deg, transparent 0 143px, #e9e9ee 143px 144px) 776px 0 / 100% 29px no-repeat,
    linear-gradient(#f7f7ff, #f7f7ff) 0 0 / 100% 29px no-repeat,
    linear-gradient(90deg, #ececf0, #ececf0) 26px 0 / 1px 100% no-repeat,
    repeating-linear-gradient(transparent 0 28px, #f9f9f7 28px 29px),
    repeating-linear-gradient(90deg, transparent 0 143px, #f8f8f8 143px 144px) 776px 0 / 100% 100% no-repeat,
    linear-gradient(#f9f9f9, #f9f9f9) 170px 0 / 1px 100% no-repeat,
    linear-gradient(#f9f9f9, #f9f9f9) 337px 0 / 1px 100% no-repeat,
    linear-gradient(#f9f9f9, #f9f9f9) 492px 0 / 1px 100% no-repeat,
    linear-gradient(#f9f9f9, #f9f9f9) 636px 0 / 1px 100% no-repeat,
    #fff;
}
table { border-collapse: collapse; table-layout: fixed; width: 777px; font-family: "Noto Sans", sans-serif; font-size: 19px; color: #333; }
.c-sel { width: 27px; }
.c-id { width: 144px; }
.c-case { width: 167px; }
.c-name { width: 155px; }
.c-elig { width: 144px; }
.c-add { width: 140px; }
th, td { padding: 0 3px; line-height: 28px; height: 29px; white-space: nowrap; }
thead th { height: 28px; line-height: 26px; }
th { font-weight: 400; background: #dfe2e8; border-right: 1px solid #adb2ba; }
thead th:last-child { border-right: 0; }
thead div { display: flex; align-items: center; }
thead span { flex: 1; text-align: center; }
thead button { width: 18px; height: 20px; display: grid; place-items: center; }
thead .dn { color: #222; }
.active { background: linear-gradient(#ffd257, #fff06e); }
.add { font-style: italic; }
.corner svg { margin: 6px 0 0 8px; }
tbody th { border-bottom: 1px solid #adb2ba; padding: 0 5px; }
td { border: 1px solid #e9e9dc; border-top: 0; background: #fff; }
tbody tr:nth-child(even) td { background: #f1f1f1; }
.id { text-align: right; padding-right: 1px; }
.case { text-align: center; }
.current th { background: #ffd65c; }
.current td { background: #a4cef0; color: #000; }
.current .id { background: #fff; outline: 2px solid #f4a3a8; outline-offset: -1px; }
mark { display: block; width: 11px; margin-left: auto; background: #000; color: #fff; line-height: 27px; }
.recbar { display: flex; flex: none; height: 29px; padding-bottom: 1px; border-top: 1px solid #a5a8ae; background: linear-gradient(#f4f5f8 50%, #e5e6eb 50%); font-size: 15px; color: #555; }
.part { display: flex; align-items: center; border-right: 1px solid #a5a8ae; }
.part input { height: 24px; border: 1px solid #a5a8ae; background: #fff; color: #111; padding-left: 2px; }
.nav-part { width: 267px; padding-left: 4px; gap: 8px; }
.nav-part button { padding: 0 4px; }
.nav-part .firstrec { padding: 0 4px 0 1px; }
.nav-part .prev { padding: 0 0 0 5px; }
.recno { width: 78px; }
.next, .last { margin-right: 2px; }
.nav-part .newrec { padding: 0; margin-left: -3px; }
.filter-part { width: 150px; padding-left: 31px; gap: 3px; color: #8c8c8c; }
.search-part { border: 0; padding-left: 5px; }
.search-part input { width: 106px; }

/* Status bar */
.status { display: flex; flex: none; align-items: center; height: 32px; padding-left: 7px; font-size: 15px; line-height: 20px; color: #555; }
.status span { padding-bottom: 2px; }
.mode { flex: 1; }
.scroll { margin: 0 23px 0 16px; }
.view { width: 46px; height: 32px; display: grid; place-items: center; }
.on { background: #c8c8c8; }

/* Taskbar */
.taskbar { display: flex; flex: none; height: 60px; background: #1b2838; color: #fff; }
.start { width: 72px; display: grid; place-items: center; }
.tsearch { width: 516px; display: flex; align-items: center; gap: 18px; padding: 0 0 0 16px; background: #f1f1f1; border: 2px solid #c0c0c0; }
.tsearch input { flex: 1; min-width: 0; padding-top: 2px; font-size: 21px; line-height: 30px; color: #222; }
.tsearch input::placeholder { color: #222; opacity: 1; }
.app { width: 75px; display: grid; place-items: center; }
.run { background: linear-gradient(#76b9ed, #76b9ed) 50% 100% / 61px 3px no-repeat; }
.active-app { background-color: #4a5563; background-size: 100% 3px; }
.tray { margin: 0 6px 0 auto; display: flex; align-items: center; gap: 14px; padding-right: 10px; border-right: 2px solid #6d7681; }
.lang { font-size: 17px; }
.clock { display: flex; flex-direction: column; width: 100px; text-align: center; font-size: 17px; line-height: 28px; }
.note { margin: 0 20px 0 6px; }
```
